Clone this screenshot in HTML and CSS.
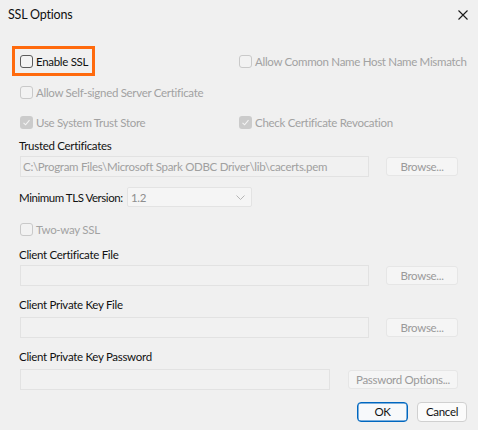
FILE: index.html
```html
<!DOCTYPE html>
<html>
<head>
<meta charset="utf-8">
<link rel="stylesheet" href="styles.css">
</head>
<body>
<div class="dialog">
  <div class="titlebar">
    <span class="title">SSL Options</span>
    <svg class="close" width="10" height="10" viewBox="0 0 10 10"><path d="M0.5 0.5 L9.5 9.5 M9.5 0.5 L0.5 9.5" stroke="#1a1a1a" stroke-width="1.1" fill="none"/></svg>
  </div>
  <div class="body">
    <div class="row r1">
      <label class="highlight"><span class="cb"></span><span>Enable SSL</span></label>
      <label class="opt right dis"><span class="cb dis"></span><span>Allow Common Name Host Name Mismatch</span></label>
    </div>
    <div class="row r2">
      <label class="opt dis"><span class="cb dis"></span><span>Allow Self-signed Server Certificate</span></label>
    </div>
    <div class="row r3">
      <label class="opt dis"><span class="cb checked"><svg width="9" height="9" viewBox="0 0 9 9"><path d="M1.5 4.8 L3.6 6.8 L7.5 2.2" stroke="#f4f4f4" stroke-width="1.1" fill="none"/></svg></span><span>Use System Trust Store</span></label>
      <label class="opt right dis"><span class="cb checked"><svg width="9" height="9" viewBox="0 0 9 9"><path d="M1.5 4.8 L3.6 6.8 L7.5 2.2" stroke="#f4f4f4" stroke-width="1.1" fill="none"/></svg></span><span>Check Certificate Revocation</span></label>
    </div>
    <div class="label l1">Trusted Certificates</div>
    <div class="field f1">
      <div class="input wide">C:\Program Files\Microsoft Spark ODBC Driver\lib\cacerts.pem</div>
      <div class="btn browse">Browse...</div>
    </div>
    <div class="row tls">
      <span class="tlslabel">Minimum TLS Version:</span>
      <div class="select"><span>1.2</span><svg width="9" height="5" viewBox="0 0 9 5"><path d="M0.5 0.5 L4.5 4.5 L8.5 0.5" stroke="#b5b5b5" stroke-width="1" fill="none"/></svg></div>
    </div>
    <div class="row r2w">
      <label class="opt dis"><span class="cb dis"></span><span>Two-way SSL</span></label>
    </div>
    <div class="label l2">Client Certificate File</div>
    <div class="field f2">
      <div class="input wide"></div>
      <div class="btn browse">Browse...</div>
    </div>
    <div class="label l3">Client Private Key File</div>
    <div class="field f3">
      <div class="input wide"></div>
      <div class="btn browse">Browse...</div>
    </div>
    <div class="label l3">Client Private Key Password</div>
    <div class="field f3">
      <div class="input pw"></div>
      <div class="btn pwbtn">Password Options...</div>
    </div>
    <div class="actions">
      <div class="btn2 ok">OK</div>
      <div class="btn2 cancel">Cancel</div>
    </div>
  </div>
</div>
</body>
</html>
```

FILE: styles.css
```css
* { box-sizing: border-box; }
html, body { margin: 0; padding: 0; }
body {
  width: 478px;
  height: 430px;
  background: #f0f0f0;
  font-family: Lato, "Noto Sans", sans-serif;
  font-size: 11.5px;
  letter-spacing: -0.3px;
  color: #1a1a1a;
  overflow: hidden;
  white-space: nowrap;
}
.dialog { width: 478px; height: 430px; }
.titlebar {
  height: 30px;
  display: flex;
  align-items: center;
  justify-content: space-between;
  padding: 0 10px 2px 8px;
}
.title { font-size: 12.5px; letter-spacing: -0.2px; color: #111; }
.close { margin-top: 1px; }
.body { padding: 0 11px 0 20px; display: flex; flex-direction: column; }
.row { display: flex; align-items: center; position: relative; }
.r1 { height: 30px; margin-top: 16px; }
.r2 { height: 20px; margin-top: 6px; }
.r3 { height: 20px; margin-top: 10px; }
.r2w { height: 20px; margin-top: 12px; }
.opt { display: flex; align-items: center; gap: 3px; }
.opt.dis { color: #a2a2a2; }
.right { position: absolute; left: 219px; }
.highlight {
  display: flex; align-items: center; gap: 3px;
  width: 83px; height: 30px;
  margin-left: -8px;
  padding-left: 5px;
  border: 3px solid #ff6a0d;
  color: #111;
}
.cb {
  width: 13px; height: 13px;
  border: 1px solid #5c5c5c;
  border-radius: 3px;
  background: #f3f3f3;
  flex: none;
  display: flex; align-items: center; justify-content: center;
}
.cb.dis { border-color: #c9c9c9; background: #f2f2f2; }
.cb.checked { border: none; background: #cbcbcb; }
.label { height: 16px; line-height: 16px; margin-left: -1px; color: #111; }
.l1 { margin-top: 6px; }
.l2 { margin-top: 8px; }
.l3 { margin-top: 11px; }
.field { display: flex; align-items: center; height: 21px; }
.f1, .f2 { margin-top: 2px; }
.f3 { margin-top: 4px; }
.input {
  height: 21px;
  border: 1px solid #e2e2e2;
  background: #f1f1f1;
  color: #a0a0a0;
  padding-left: 2px;
  line-height: 19px;
  overflow: hidden;
}
.wide { width: 349px; }
.pw { width: 310px; }
.btn {
  height: 19px;
  border: 1px solid #e6e6e6;
  border-radius: 3px;
  background: #f5f5f5;
  color: #9a9a9a;
  display: flex; align-items: center; justify-content: center;
  padding-bottom: 1px;
}
.browse { width: 72px; margin-left: 17px; }
.pwbtn { width: 110px; margin-left: 18px; }
.tls { height: 20px; margin-top: 10px; }
.tlslabel { margin-left: -1px; color: #111; width: 108px; flex: none; letter-spacing: -0.45px; }
.select {
  width: 125px; height: 20px;
  border: 1px solid #e3e3e3;
  background: #f5f5f5;
  border-radius: 2px;
  display: flex; align-items: center; justify-content: space-between;
  padding: 0 6px 0 3px;
  color: #8e8e8e;
}
.actions { display: flex; justify-content: flex-end; gap: 9px; margin-top: 12px; }
.btn2 {
  height: 20px;
  border-radius: 4px;
  display: flex; align-items: center; justify-content: center;
  color: #111;
  padding-bottom: 1px;
}
.ok { width: 51px; border: 1px solid #0067c0; background: #f7f9fb; box-shadow: inset 0 0 0 0.5px #0067c0; }
.cancel { width: 50px; border: 1px solid #d0d0d0; background: #fbfbfb; }
```
